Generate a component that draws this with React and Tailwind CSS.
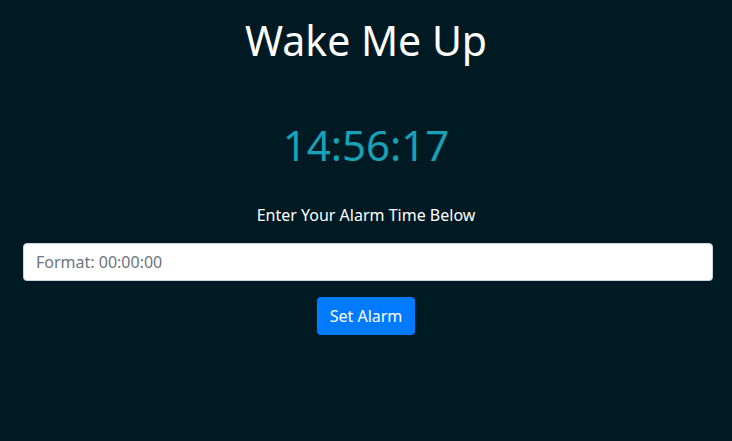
export default function App() {
  return (
    <div
      className="min-h-[441px] w-full bg-[#001a24] flex flex-col items-center text-white"
      style={{ fontFamily: '"Noto Sans", "Open Sans", sans-serif' }}
    >
      <h1 className="mt-[12px] text-[41px] leading-[56px] font-normal">Wake Me Up</h1>

      <div className="mt-[49px] text-[42px] leading-[56px] text-[#17a2b8]">14:56:17</div>

      <p className="mt-[30px] text-[16px] leading-[24px]">Enter Your Alarm Time Below</p>

      <div className="w-full pl-[23px] pr-[19px] mt-[16px]">
        <input
          type="text"
          placeholder="Format: 00:00:00"
          className="w-full h-[38px] rounded-[4px] bg-white border border-[#ced4da] px-[12px] text-[16px] text-[#495057] placeholder:text-[#6c757d] outline-none"
        />
      </div>

      <button className="mt-[16px] h-[38px] px-[13px] rounded-[4px] bg-[#007bff] text-white text-[16px]">
        Set Alarm
      </button>
    </div>
  );
}
